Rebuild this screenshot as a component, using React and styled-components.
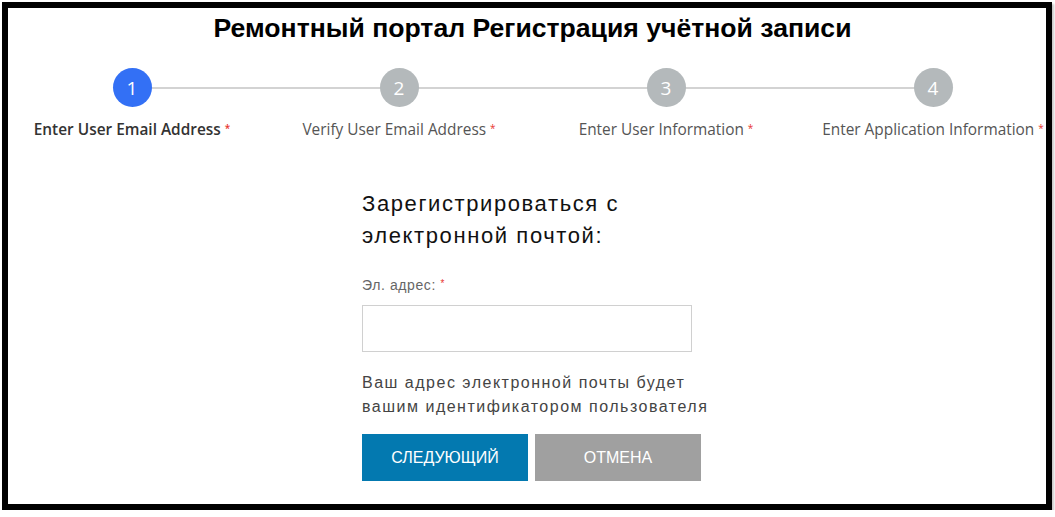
import React from "react";
import styled, { createGlobalStyle } from "styled-components";

const STEPS = [
  "Enter User Email Address",
  "Verify User Email Address",
  "Enter User Information",
  "Enter Application Information",
];

const App = () => {
  const current = 0;
  return (
    <>
      <GlobalStyle />
      <StFrame>
        <StTitle>Ремонтный портал Регистрация учётной записи</StTitle>
        <StSteps>
          {STEPS.map((label, i) => (
            <StStep key={label} first={i === 0} last={i === STEPS.length - 1}>
              <StCircle active={i === current}>{i + 1}</StCircle>
              <StStepLabel active={i === current}>
                {label} <StStar>*</StStar>
              </StStepLabel>
            </StStep>
          ))}
        </StSteps>
        <StForm>
          <StHeading>
            Зарегистрироваться с
            <br />
            электронной почтой:
          </StHeading>
          <StLabel>
            Эл. адрес: <StStar>*</StStar>
          </StLabel>
          <StInput type="email" />
          <StHelp>
            Ваш адрес электронной почты будет
            <br />
            вашим идентификатором пользователя
          </StHelp>
          <StButtons>
            <StButton bg="#0379b0">СЛЕДУЮЩИЙ</StButton>
            <StButton bg="#a0a0a0">ОТМЕНА</StButton>
          </StButtons>
        </StForm>
      </StFrame>
    </>
  );
};

export default App;

const GlobalStyle = createGlobalStyle`
  body {
    margin: 0;
    background: #fff;
    font-family: "Liberation Sans", Arial, sans-serif;
  }
`;

const StFrame = styled.div`
  box-sizing: border-box;
  width: 1050px;
  height: 508px;
  margin: 2px 0 0 2px;
  border: 6px solid #000;
  box-shadow: 2px 2px 2px #c8c8c8;
  overflow: hidden;
  display: flex;
  flex-direction: column;
  align-items: center;
  padding-left: 11px;
`;

const StTitle = styled.h1`
  margin: 4px 0 0;
  font-size: 26.6px;
  line-height: 32px;
  font-weight: bold;
  color: #000;
`;

const StSteps = styled.div`
  display: grid;
  grid-template-columns: repeat(4, 267px);
  justify-content: center;
  width: 1068px;
  flex-shrink: 0;
  margin-top: 24px;
`;

const StStep = styled.div`
  position: relative;
  display: flex;
  flex-direction: column;
  align-items: center;

  &::before {
    content: "";
    position: absolute;
    top: 19px;
    left: ${(p) => (p.first ? "50%" : "0")};
    right: ${(p) => (p.last ? "50%" : "0")};
    height: 2px;
    background: #d3d3d3;
  }
`;

const StCircle = styled.div`
  position: relative;
  width: 39px;
  height: 39px;
  border-radius: 50%;
  background: ${(p) => (p.active ? "#3370f5" : "#b4b9bb")};
  color: #fff;
  display: flex;
  align-items: center;
  justify-content: center;
  font-family: "Open Sans", sans-serif;
  font-size: 19px;
`;

const StStepLabel = styled.div`
  margin-top: 11px;
  font-family: "Open Sans", sans-serif;
  font-size: 15.4px;
  line-height: 20px;
  white-space: nowrap;
  font-weight: ${(p) => (p.active ? 600 : 400)};
  color: ${(p) => (p.active ? "#333" : "#555")};
`;

const StStar = styled.span`
  color: #e8342f;
  font-size: 10px;
  letter-spacing: 0;
  vertical-align: 3px;
`;

const StForm = styled.div`
  width: 340px;
  margin-top: 48px;
  margin-left: -1px;
  display: flex;
  flex-direction: column;
  align-items: flex-start;
`;

const StHeading = styled.h2`
  margin: 0;
  font-size: 22px;
  line-height: 32px;
  font-weight: normal;
  color: #111;
  letter-spacing: 1.6px;
`;

const StLabel = styled.div`
  margin-top: 23px;
  font-size: 14px;
  line-height: 18px;
  letter-spacing: 0.6px;
  color: #666;
`;

const StInput = styled.input`
  box-sizing: border-box;
  margin-top: 11px;
  width: 330px;
  height: 47px;
  border: 1px solid #d0d0d0;
  outline: none;
`;

const StHelp = styled.p`
  margin: 19px 0 0;
  font-size: 16px;
  line-height: 24px;
  letter-spacing: 1.5px;
  white-space: nowrap;
  color: #444;
`;

const StButtons = styled.div`
  display: flex;
  gap: 7px;
  margin-top: 15px;
`;

const StButton = styled.button`
  width: 166px;
  height: 47px;
  border: none;
  padding: 0;
  background: ${(p) => p.bg};
  color: #fff;
  font-family: "Liberation Sans", Arial, sans-serif;
  font-size: 16px;
  cursor: pointer;
`;
